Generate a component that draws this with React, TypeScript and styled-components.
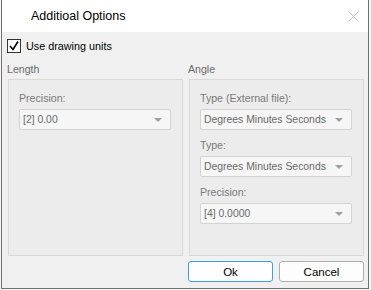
import React from "react";
import styled, { createGlobalStyle } from "styled-components";

const Global = createGlobalStyle`
  html, body { margin: 0; padding: 0; background: #f7f7f7; }
  body { font-family: "Liberation Sans", Arial, sans-serif; font-size: 10.6px; }
`;

const Window = styled.div`
  margin-left: 1px;
  width: 368px;
  height: 289px;
  box-sizing: border-box;
  border: 1px solid #707070;
  border-top: none;
  background: #f0f0f0;
  display: flex;
  flex-direction: column;
`;

const TitleBar = styled.div`
  height: 32px;
  background: #ffffff;
  display: flex;
  align-items: center;
  justify-content: space-between;
  padding: 0 9px 0 29px;
  font-size: 12.5px;
  color: #000;
`;

const Body = styled.div`
  flex: 1;
  display: flex;
  flex-direction: column;
  padding: 7px 4px 0 5px;
`;

const CheckRow = styled.label`
  display: flex;
  align-items: center;
  gap: 5px;
  height: 14px;
  color: #000;
  font-size: 10.8px;
`;

const Box = styled.span`
  width: 12px;
  height: 12px;
  border: 1px solid #333;
  background: #fff;
  display: flex;
  align-items: center;
  justify-content: center;
`;

const Columns = styled.div`
  display: grid;
  grid-template-columns: 175px 175px;
  column-gap: 6px;
  margin-top: 8px;
  padding-left: 1px;
`;

const Column = styled.div`
  display: flex;
  flex-direction: column;
`;

const GroupTitle = styled.div`
  height: 16px;
  line-height: 16px;
  color: #6a6a6a;
  margin-left: -1px;
  margin-bottom: 2px;
`;

const Panel = styled.div`
  height: 177px;
  box-sizing: border-box;
  border: 1px solid #d9d9d9;
  background: #ececec;
  padding: 10px 11px 0 10px;
  display: flex;
  flex-direction: column;
`;

const FieldLabel = styled.div`
  height: 16px;
  line-height: 16px;
  color: #7a7a7a;
  margin-bottom: 3px;
  white-space: nowrap;
`;

const Select = styled.div`
  height: 21px;
  box-sizing: border-box;
  border: 1px solid #d3d3d3;
  border-radius: 2px;
  background: #f6f6f6;
  color: #6a6a6a;
  display: flex;
  align-items: center;
  justify-content: space-between;
  padding: 0 8px 0 3px;
  margin-bottom: 7px;
  white-space: nowrap;
  font-size: 10.4px;
`;

const Arrow = styled.span`
  width: 0;
  height: 0;
  border-left: 4px solid transparent;
  border-right: 4px solid transparent;
  border-top: 4px solid #a0a0a0;
`;

const Buttons = styled.div`
  display: flex;
  justify-content: flex-end;
  gap: 6px;
  margin-top: 5px;
`;

const Button = styled.button<{ $primary?: boolean }>`
  width: 85px;
  height: 21px;
  box-sizing: border-box;
  border: 1px solid ${(p) => (p.$primary ? "#3c9ff0" : "#adadad")};
  border-radius: 3px;
  background: ${(p) => (p.$primary ? "#fdfeff" : "#fdfdfd")};
  font-family: inherit;
  font-size: 11.5px;
  color: #000;
  padding: 0;
`;

const Field = ({ label, value }: { label: string; value: string }) => (
  <>
    <FieldLabel>{label}</FieldLabel>
    <Select>
      <span>{value}</span>
      <Arrow />
    </Select>
  </>
);

export default function App() {
  return (
    <>
      <Global />
      <Window>
        <TitleBar>
          <span>Additioal Options</span>
          <svg width="11" height="11" viewBox="0 0 11 11">
            <path d="M0.5 0.5 L10.5 10.5 M10.5 0.5 L0.5 10.5" stroke="#c4c4c4" strokeWidth="1" />
          </svg>
        </TitleBar>
        <Body>
          <CheckRow>
            <Box>
              <svg width="10" height="10" viewBox="0 0 10 10">
                <path d="M1 5 L4 8.5 L9 0.5" stroke="#000" strokeWidth="1.6" fill="none" />
              </svg>
            </Box>
            <span>Use drawing units</span>
          </CheckRow>
          <Columns>
            <Column>
              <GroupTitle>Length</GroupTitle>
              <Panel>
                <Field label="Precision:" value="[2] 0.00" />
              </Panel>
            </Column>
            <Column>
              <GroupTitle>Angle</GroupTitle>
              <Panel>
                <Field label="Type (External file):" value="Degrees Minutes Seconds" />
                <Field label="Type:" value="Degrees Minutes Seconds" />
                <Field label="Precision:" value="[4] 0.0000" />
              </Panel>
            </Column>
          </Columns>
          <Buttons>
            <Button $primary>Ok</Button>
            <Button>Cancel</Button>
          </Buttons>
        </Body>
      </Window>
    </>
  );
}
